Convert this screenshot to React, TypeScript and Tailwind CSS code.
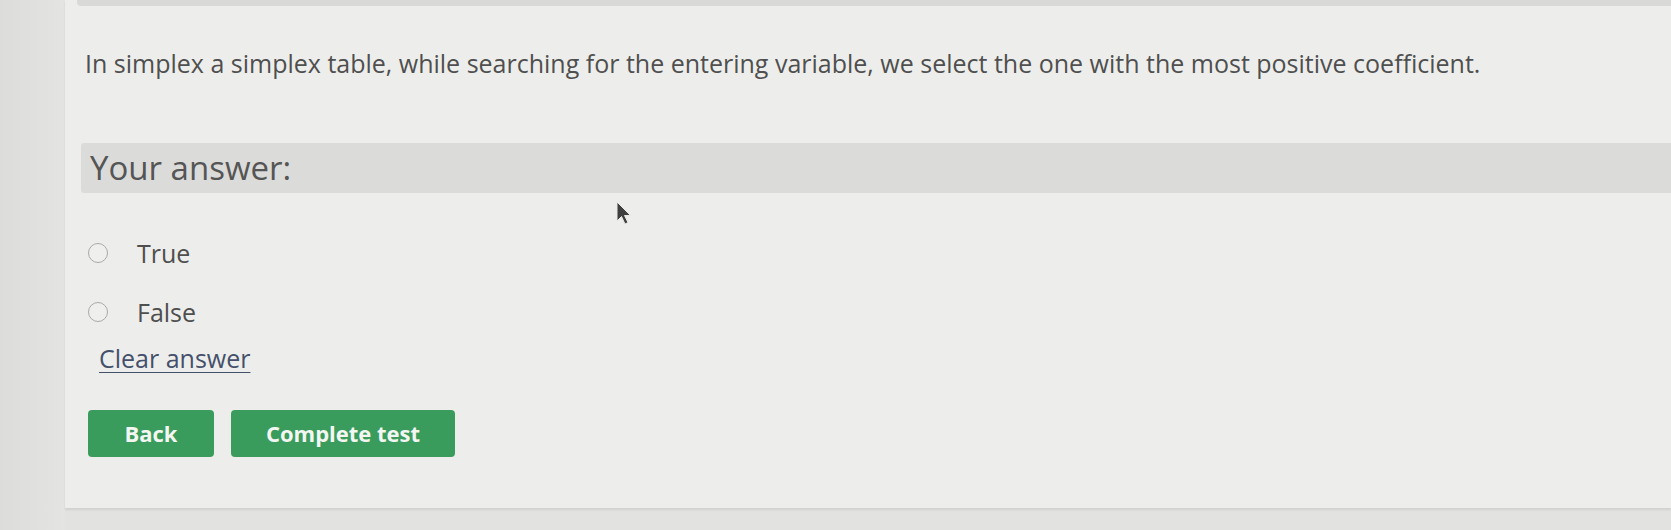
import React from "react";

// Radio option row
function Option({ label }: { label: string }) {
  return (
    <label className="flex h-[30px] items-center">
      <span className="ml-[23px] h-[20px] w-[20px] rounded-full border-[1.5px] border-[#a9a9a7] bg-[#efefed]" />
      <span className="ml-[29px] text-[25px] leading-[30px] text-[#4f4f4f]">{label}</span>
    </label>
  );
}

export default function App() {
  return (
    <div
      className="relative flex h-[530px] w-[1671px] overflow-hidden bg-[#e2e2e0]"
      style={{ fontFamily: '"Open Sans", "Liberation Sans", sans-serif' }}
    >
      <div className="w-[65px] shrink-0 bg-gradient-to-r from-[#dcdcda] to-[#e4e4e2]" />

      <div className="flex flex-1 flex-col">
        <div className="flex h-[508px] flex-col bg-[#edeeeb] shadow-[0_2px_2px_rgba(0,0,0,0.08)]">
          <div className="ml-[12px] h-[6px] rounded-bl-[4px] bg-[#d9d9d7]" />

          <p className="ml-[20px] mt-[41px] text-[25px] leading-[32px] text-[#4f4f4f]">
            In simplex a simplex table, while searching for the entering variable, we select the one with the most positive coefficient.
          </p>

          <div className="ml-[16px] mt-[64px] flex h-[50px] items-center rounded-l-[3px] bg-[#dbdbd9] pl-[9px]">
            <span className="text-[33px] leading-[40px] text-[#555555]">Your answer:</span>
          </div>

          <div className="mt-[45px] flex flex-col gap-[29px]">
            <Option label="True" />
            <Option label="False" />
          </div>

          <a className="ml-[34px] mt-[16px] w-fit text-[25px] leading-[30px] text-[#45506b] underline decoration-1 underline-offset-[4px]">
            Clear answer
          </a>

          <div className="ml-[23px] mt-[37px] flex gap-[17px]">
            <button className="h-[47px] w-[126px] rounded-[4px] bg-[#3a9c5c] text-[22px] font-bold text-[#f3f6f2]">
              Back
            </button>
            <button className="h-[47px] w-[224px] rounded-[4px] bg-[#3a9c5c] text-[22px] font-bold text-[#f3f6f2]">
              Complete test
            </button>
          </div>
        </div>
      </div>

      {/* mouse pointer */}
      <svg className="absolute left-[616px] top-[201px]" width="16" height="26" viewBox="0 0 16 26">
        <path d="M1 1 L1 20 L5.5 15.5 L9 23 L12 21.5 L8.5 14.5 L14.5 14.5 Z" fill="#3f3f3f" stroke="#e8e8e6" strokeWidth="1" />
      </svg>
    </div>
  );
}
